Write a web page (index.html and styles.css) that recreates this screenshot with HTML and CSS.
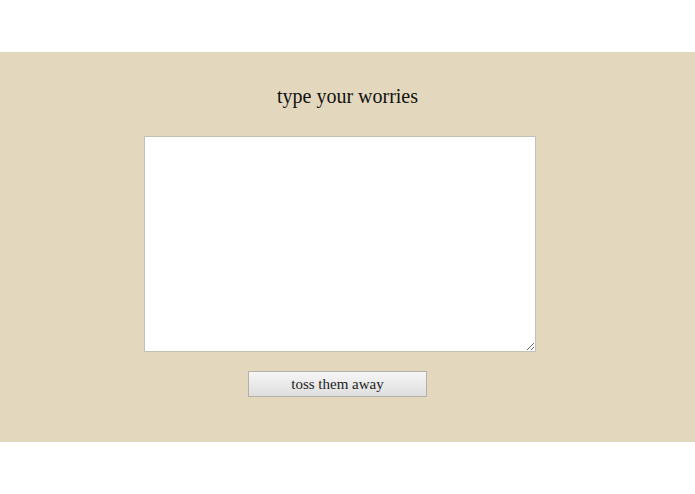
FILE: index.html
```html
<!DOCTYPE html>
<html>
<head>
<meta charset="utf-8">
<link rel="stylesheet" href="styles.css">
</head>
<body>
<div class="top"></div>
<main class="band">
  <h1 class="title">type your worries</h1>
  <textarea class="worries"></textarea>
  <button class="toss">toss them away</button>
</main>
</body>
</html>
```
FILE: styles.css
```css
html, body { margin: 0; padding: 0; background: #fff; }
.top { height: 52px; }
.band {
  background: #e3d8bd;
  height: 390px;
  box-sizing: border-box;
  padding: 31px 0 0 144px;
  display: flex;
  flex-direction: column;
  align-items: flex-start;
}
.title {
  margin: 0 0 0 -144px;
  width: 695px;
  height: 53px;
  text-align: center;
  font-family: "Liberation Serif", serif;
  font-weight: normal;
  font-size: 20px;
  color: #111;
  line-height: 26px;
}
.worries {
  width: 392px;
  height: 216px;
  box-sizing: border-box;
  margin: 0;
  border: 1px solid #c4c0b8;
  background: #fff;
  display: block;
  resize: both;
}
.toss {
  margin: 19px 0 0 104px;
  width: 179px;
  height: 26px;
  box-sizing: border-box;
  border: 1px solid #b4b0a8;
  border-radius: 0;
  background: linear-gradient(#f6f6f6, #dedede);
  font-family: "Liberation Serif", serif;
  font-size: 15px;
  color: #222;
  padding: 0;
}
```
